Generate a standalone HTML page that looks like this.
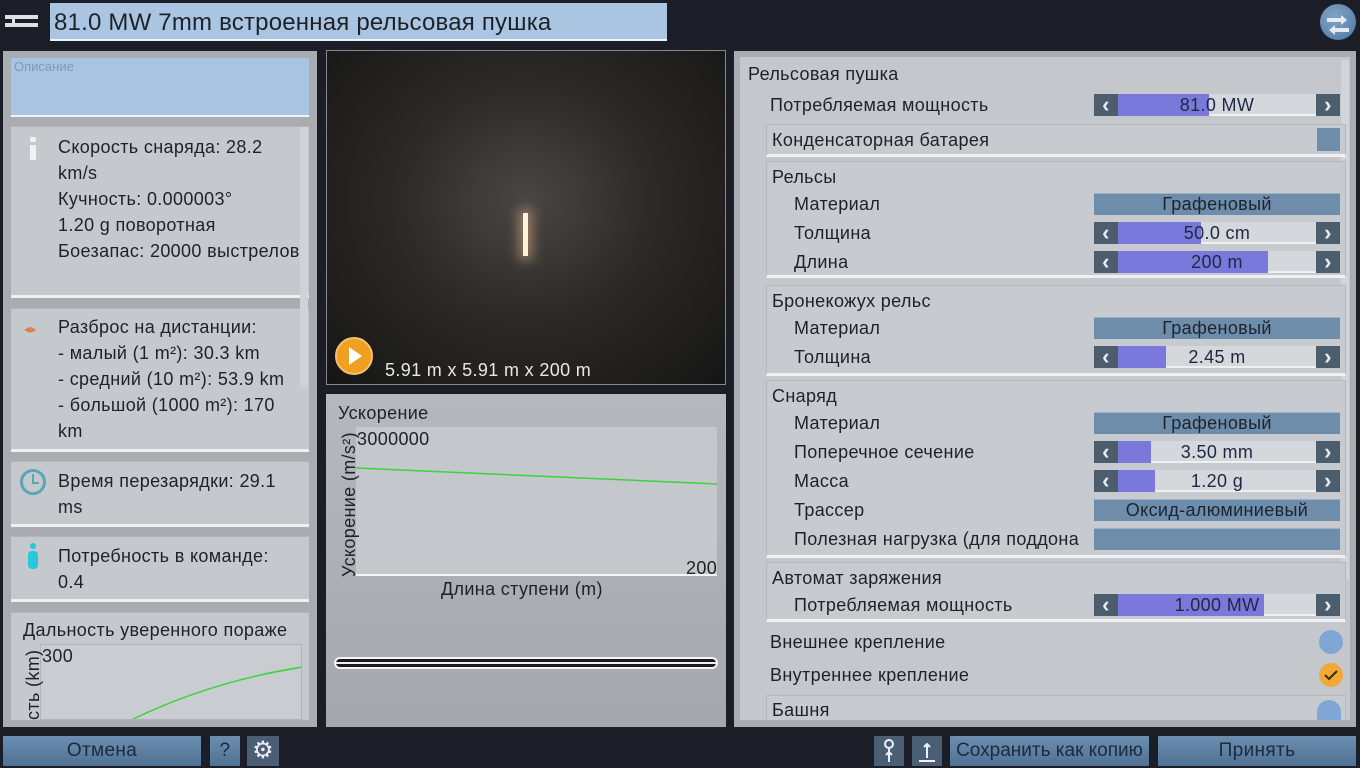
<!DOCTYPE html>
<html><head><meta charset="utf-8">
<style>
*{margin:0;padding:0;box-sizing:border-box}
body{width:1360px;height:768px;background:#1b1e27;font-family:"Liberation Sans","DejaVu Sans",sans-serif;color:#1e2228;position:relative;overflow:hidden;font-size:18px;letter-spacing:0.35px}
.a{position:absolute}
.t{position:absolute;white-space:nowrap;line-height:22px}
.card{position:absolute;background:#c5c9ce;border-bottom:3px solid #eef0f2;border-top:1px solid #b2b6bb}
.sl{position:absolute;height:22px;width:246px}
.sl .l,.sl .r{position:absolute;top:0;width:24px;height:22px;background:#4c5d6e;color:#e8ecf0;text-align:center;font-size:22px;font-weight:bold;line-height:21px}
.sl .l{left:0}.sl .r{right:0}
.sl .tr{position:absolute;left:24px;right:24px;top:0;height:22px;background:#d4d7db;border-bottom:2px solid #eef0f2}
.sl .f{position:absolute;left:0;top:0;height:22px;background:#7b78dc}
.sl .v{position:absolute;left:0;right:0;top:0;text-align:center;line-height:22px;color:#1e2840}
.dd{position:absolute;left:1094px;width:246px;height:22px;background:#6e8dab;border-top:1px solid #9ab2c8;text-align:center;line-height:21px;color:#1c2430}
.grp{position:absolute;left:766px;width:580px;border:1px solid #b4b8bd;border-bottom:3px solid #eef0f2;background:#c7cbcf}
.btn{position:absolute;top:736px;height:30px;background:linear-gradient(#6b8eb1,#4f7294);color:#1c2a3a;text-align:center;line-height:30px;font-size:19px}
</style></head><body>
<!-- top bar -->
<div class="a" style="left:5px;top:15px;width:33px;height:4px;background:#dde1e5"></div>
<div class="a" style="left:5px;top:23px;width:33px;height:4px;background:#dde1e5"></div>
<div class="a" style="left:12px;top:15px;width:3px;height:12px;background:#dde1e5"></div>
<div class="a" style="left:50px;top:3px;width:617px;height:38px;background:#aac5e2;border-bottom:2px solid #eef3f8"></div>
<div class="t" style="left:54px;top:10px;font-size:24px;line-height:26px;letter-spacing:0.2px">81.0 MW 7mm встроенная рельсовая пушка</div>
<div class="a" style="left:1320px;top:4px;width:36px;height:36px;border-radius:50%;background:radial-gradient(circle at 40% 35%,#7fa4c8,#4e77a0)"></div>
<svg class="a" style="left:1320px;top:4px" width="36" height="36"><path d="M7 14h14v-3l6 5-6 5v-3H7z" fill="#e6eaee"/><path d="M29 24H15v-3l-6 5 6 5v-3h14z" fill="#e6eaee"/></svg>

<!-- left panel -->
<div class="a" style="left:3px;top:51px;width:314px;height:676px;background:#a9adb2"></div>
<div class="a" style="left:11px;top:58px;width:298px;height:59px;background:#a8c4e2;border-bottom:2px solid #eef3f8"></div>
<div class="t" style="left:14px;top:59px;font-size:13px;line-height:16px;color:#7f98b5;letter-spacing:0">Описание</div>
<div class="card" style="left:11px;top:126px;width:298px;height:172px"></div>
<div class="a" style="left:30px;top:137px;width:6px;height:5px;background:#f2f2f2;border-radius:2px"></div>
<div class="a" style="left:30px;top:145px;width:6px;height:15px;background:#f2f2f2"></div>
<div class="t" style="left:58px;top:134px;line-height:26px">Скорость снаряда: 28.2<br>km/s<br>Кучность: 0.000003°<br>1.20 g поворотная<br>Боезапас: 20000 выстрелов</div>
<div class="card" style="left:11px;top:308px;width:298px;height:144px"></div>
<div class="t" style="left:24px;top:318px;color:#e07a40;font-size:12px">◂▸</div>
<div class="t" style="left:58px;top:314px;line-height:26px">Разброс на дистанции:<br>- малый (1 m²): 30.3 km<br>- средний (10 m²): 53.9 km<br>- большой (1000 m²): 170<br>km</div>
<div class="a" style="left:300px;top:127px;width:8px;height:260px;background:#d0d3d6"></div>
<div class="card" style="left:11px;top:461px;width:298px;height:66px"></div>
<div class="a" style="left:20px;top:469px;width:26px;height:26px;border:3px solid #5aa6b4;border-radius:50%"></div>
<div class="a" style="left:32px;top:474px;width:2px;height:9px;background:#5aa6b4"></div>
<div class="a" style="left:32px;top:482px;width:7px;height:2px;background:#5aa6b4"></div>
<div class="t" style="left:58px;top:468px;line-height:26px">Время перезарядки: 29.1<br>ms</div>
<div class="card" style="left:11px;top:536px;width:298px;height:66px"></div>
<div class="a" style="left:30px;top:543px;width:6px;height:6px;background:#28c8dc;border-radius:50%"></div>
<div class="a" style="left:28px;top:551px;width:10px;height:18px;background:#28c8dc;border-radius:4px"></div>
<div class="t" style="left:58px;top:543px;line-height:26px">Потребность в команде:<br>0.4</div>
<div class="card" style="left:11px;top:612px;width:298px;height:108px;border-bottom:none"></div>
<div class="t" style="left:23px;top:619px">Дальность уверенного пораже</div>
<div class="a" style="left:40px;top:644px;width:262px;height:76px;background:#c9cdd1;border:1px solid #b0b4b9;overflow:hidden">
<svg width="262" height="76"><path d="M88 76Q170 36 262 22" fill="none" stroke="#3cd23c" stroke-width="1.5"/></svg></div>
<div class="t" style="left:42px;top:645px">300</div>
<div class="t" style="left:22px;top:720px;transform:rotate(-90deg);transform-origin:0 0">сть (km)</div>

<!-- video -->
<div class="a" style="left:326px;top:50px;width:400px;height:335px;background:radial-gradient(ellipse at 50% 45%,#4a4643 0%,#2c2a28 45%,#151515 100%);border:1px solid #888"></div>
<div class="a" style="left:523px;top:213px;width:5px;height:43px;background:#fff3dc;box-shadow:0 0 12px 4px rgba(255,200,150,.5)"></div>
<div class="a" style="left:335px;top:337px;width:38px;height:38px;border-radius:50%;background:#f0a020;border:2px solid #f6c070"></div>
<div class="a" style="left:349px;top:347px;width:0;height:0;border-left:13px solid #fff;border-top:9px solid transparent;border-bottom:9px solid transparent"></div>
<div class="t" style="left:385px;top:359px;color:#e8e8e8">5.91 m x 5.91 m x 200 m</div>

<!-- graph panel -->
<div class="a" style="left:326px;top:394px;width:400px;height:333px;background:linear-gradient(#b5b9be,#a4a8ad)"></div>
<div class="t" style="left:338px;top:402px">Ускорение</div>
<div class="a" style="left:356px;top:427px;width:361px;height:149px;background:#c4c8cc;border-bottom:2px solid #f4f4f4"></div>
<svg class="a" style="left:356px;top:427px" width="361" height="149"><polyline points="0,41 361,57" fill="none" stroke="#3cd23c" stroke-width="1.5"/></svg>
<div class="t" style="left:357px;top:428px">3000000</div>
<div class="t" style="left:686px;top:557px">200</div>
<div class="t" style="left:338px;top:577px;transform:rotate(-90deg);transform-origin:0 0">Ускорение (m/s²)</div>
<div class="t" style="left:441px;top:578px">Длина ступени (m)</div>
<div class="a" style="left:334px;top:657px;width:384px;height:12px;border:2px solid #f4f4f4;border-radius:6px;background:#1a1a1a"></div>
<div class="a" style="left:336px;top:662px;width:380px;height:2px;background:#eee"></div>

<!-- right panel -->
<div class="a" style="left:734px;top:51px;width:622px;height:676px;background:#a9adb2"></div>
<div class="a" style="left:740px;top:57px;width:610px;height:663px;background:#c4c8cc"></div>
<div class="a" style="left:1341px;top:60px;width:8px;height:520px;background:#d2d5d8"></div>
<div class="t" style="left:748px;top:63px">Рельсовая пушка</div>
<div class="t" style="left:770px;top:94px">Потребляемая мощность</div>
<div class="sl" style="left:1094px;top:94px"><div class="l">‹</div><div class="tr"><div class="f" style="width:91px"></div><div class="v">81.0 MW</div></div><div class="r">›</div></div>

<div class="grp" style="left:766px;top:124px;height:33px"></div>
<div class="t" style="left:772px;top:129px">Конденсаторная батарея</div>
<div class="a" style="left:1317px;top:128px;width:23px;height:23px;background:#6e8dab"></div>

<div class="grp" style="top:161px;height:117px"></div>
<div class="t" style="left:772px;top:166px">Рельсы</div>
<div class="t" style="left:794px;top:193px">Материал</div>
<div class="dd" style="top:193px">Графеновый</div>
<div class="t" style="left:794px;top:222px">Толщина</div>
<div class="sl" style="left:1094px;top:222px"><div class="l">‹</div><div class="tr"><div class="f" style="width:83px"></div><div class="v">50.0 cm</div></div><div class="r">›</div></div>
<div class="t" style="left:794px;top:251px">Длина</div>
<div class="sl" style="left:1094px;top:251px"><div class="l">‹</div><div class="tr"><div class="f" style="width:150px"></div><div class="v">200 m</div></div><div class="r">›</div></div>

<div class="grp" style="top:285px;height:91px"></div>
<div class="t" style="left:772px;top:290px">Бронекожух рельс</div>
<div class="t" style="left:794px;top:317px">Материал</div>
<div class="dd" style="top:317px">Графеновый</div>
<div class="t" style="left:794px;top:346px">Толщина</div>
<div class="sl" style="left:1094px;top:346px"><div class="l">‹</div><div class="tr"><div class="f" style="width:48px"></div><div class="v">2.45 m</div></div><div class="r">›</div></div>

<div class="grp" style="top:380px;height:178px"></div>
<div class="t" style="left:772px;top:385px">Снаряд</div>
<div class="t" style="left:794px;top:412px">Материал</div>
<div class="dd" style="top:412px">Графеновый</div>
<div class="t" style="left:794px;top:441px">Поперечное сечение</div>
<div class="sl" style="left:1094px;top:441px"><div class="l">‹</div><div class="tr"><div class="f" style="width:33px"></div><div class="v">3.50 mm</div></div><div class="r">›</div></div>
<div class="t" style="left:794px;top:470px">Масса</div>
<div class="sl" style="left:1094px;top:470px"><div class="l">‹</div><div class="tr"><div class="f" style="width:37px"></div><div class="v">1.20 g</div></div><div class="r">›</div></div>
<div class="t" style="left:794px;top:499px">Трассер</div>
<div class="dd" style="top:499px">Оксид-алюминиевый</div>
<div class="t" style="left:794px;top:528px;width:292px;overflow:hidden">Полезная нагрузка (для поддона</div>
<div class="dd" style="top:528px"></div>

<div class="grp" style="top:562px;height:60px"></div>
<div class="t" style="left:772px;top:567px">Автомат заряжения</div>
<div class="t" style="left:794px;top:594px">Потребляемая мощность</div>
<div class="sl" style="left:1094px;top:594px"><div class="l">‹</div><div class="tr"><div class="f" style="width:146px"></div><div class="v">1.000 MW</div></div><div class="r">›</div></div>

<div class="t" style="left:770px;top:631px">Внешнее крепление</div>
<div class="a" style="left:1319px;top:630px;width:24px;height:24px;border-radius:50%;background:#7fa6d4"></div>
<div class="t" style="left:770px;top:664px">Внутреннее крепление</div>
<div class="a" style="left:1319px;top:663px;width:24px;height:24px;border-radius:50%;background:#f0a838"></div>
<svg class="a" style="left:1319px;top:663px" width="24" height="24"><path d="M6 12l4 4 8-8" fill="none" stroke="#3a2a10" stroke-width="2"/></svg>
<div class="grp" style="top:695px;height:25px;border-bottom:none"></div>
<div class="t" style="left:772px;top:699px">Башня</div>
<div class="a" style="left:1317px;top:700px;width:24px;height:20px;border-radius:12px 12px 0 0;background:#7fa6d4"></div>

<!-- bottom -->
<div class="btn" style="left:3px;width:198px">Отмена</div>
<div class="btn" style="left:210px;width:30px">?</div>
<div class="btn" style="left:247px;width:32px;background:#4a5e74;color:#eef;font-size:24px">⚙</div>
<div class="btn" style="left:874px;width:30px;background:#4a5e74"></div>
<svg class="a" style="left:874px;top:736px" width="30" height="30"><circle cx="15" cy="8" r="4" fill="none" stroke="#eef" stroke-width="2"/><path d="M15 12v14M12 19l3-3 3 3" fill="none" stroke="#eef" stroke-width="2"/></svg>
<div class="btn" style="left:912px;width:30px;background:#4a5e74"></div>
<svg class="a" style="left:912px;top:736px" width="30" height="30"><path d="M15 22V8M12 11l3-3 3 3M7 25h16" fill="none" stroke="#eef" stroke-width="2"/></svg>
<div class="btn" style="left:950px;width:199px;letter-spacing:0">Сохранить как копию</div>
<div class="btn" style="left:1158px;width:198px">Принять</div>
</body></html>
